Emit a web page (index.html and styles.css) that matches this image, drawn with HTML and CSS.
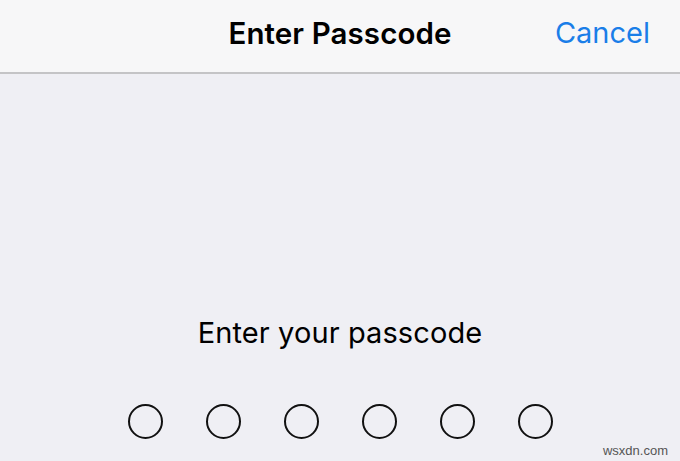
FILE: index.html
```html
<!DOCTYPE html>
<html lang="en">
<head>
    <meta charset="UTF-8">
    <meta name="viewport" content="width=device-width, initial-scale=1.0">
    <title>Enter Passcode</title>
    <link rel="stylesheet" href="styles.css">
</head>
<body>
    <div id="navBar">
        <div class="title">Enter Passcode</div>
        <div class="cancel">Cancel</div>
    </div>
    <div id="main">
        <p class="prompt">Enter your passcode</p>
        <ul id="dots">
            <li></li>
            <li></li>
            <li></li>
            <li></li>
            <li></li>
            <li></li>
        </ul>
        <div class="mark">wsxdn.com</div>
    </div>
</body>
</html>
```

FILE: styles.css
```css
*{
    margin: 0;
    padding: 0;
    box-sizing: border-box;
}
li{
    list-style: none;
}
body{
    width: 680px;
    height: 461px;
    overflow: hidden;
    background: #efeff4;
    font-family: Inter, "Liberation Sans", sans-serif;
    color: #000000;
}
#navBar{
    height: 74px;
    background: #f7f7f8;
    border-bottom: 2px solid #c4c4c6;
    display: flex;
    align-items: center;
    justify-content: center;
    position: relative;
}
#navBar .title{
    font-size: 29.5px;
    font-weight: 600;
    letter-spacing: 0.1px;
    margin-bottom: 6px;
}
#navBar .cancel{
    position: absolute;
    right: 30px;
    top: 15px;
    font-size: 29px;
    color: #1a7ee8;
}
#main{
    position: relative;
    height: 387px;
    display: flex;
    flex-direction: column;
    align-items: center;
}
.prompt{
    margin-top: 241px;
    font-size: 29px;
    letter-spacing: 0.1px;
}
#dots{
    display: flex;
    gap: 43px;
    margin-top: 54px;
}
#dots>li{
    width: 35px;
    height: 35px;
    border: 2px solid #111111;
    border-radius: 50%;
}
.mark{
    position: absolute;
    right: 12px;
    bottom: 3px;
    font-family: "Liberation Sans", sans-serif;
    font-size: 13px;
    color: #555555;
}
```
